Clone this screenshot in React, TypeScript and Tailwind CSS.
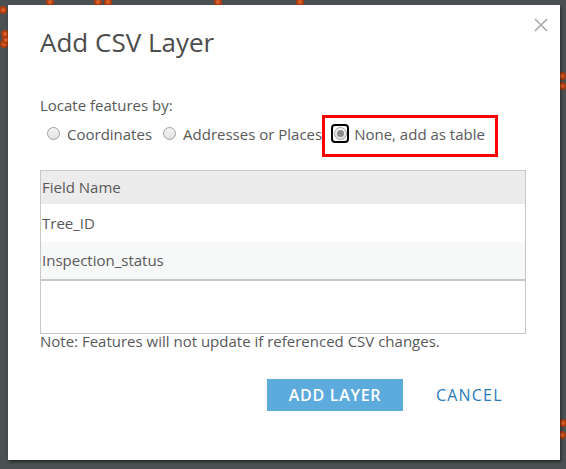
import React from "react";

const dots: [number, number][] = [
  [3, 10], [5, 34], [4, 44], [6, 40], [50, 2], [98, 2], [108, 2], [218, 2], [220, 8], [300, 2], [562, 76], [562, 86], [563, 423], [562, 435],
];

function Radio({ checked }: { checked?: boolean }) {
  return (
    <span className="inline-flex h-[13px] w-[13px] shrink-0 items-center justify-center rounded-full border border-[#a0a0a0] bg-gradient-to-b from-[#f4f4f4] to-[#e2e2e2]">
      {checked && <span className="h-[7px] w-[7px] rounded-full bg-[#8c8c8c]" />}
    </span>
  );
}

export default function App() {
  return (
    <div className="relative h-[469px] w-[566px] overflow-hidden bg-[#4b5052]" style={{ fontFamily: "'Open Sans', Lato, sans-serif" }}>
      {dots.map(([x, y], i) => (
        <span
          key={i}
          className="absolute h-[8px] w-[8px] rounded-full border-2 border-[#b03c10] bg-[#d9612b]"
          style={{ left: x - 4, top: y - 4 }}
        />
      ))}
      <div className="absolute left-[8px] top-[5px] flex h-[455px] w-[552px] flex-col bg-white pl-[32px] pr-[34px] shadow-[1px_2px_3px_rgba(0,0,0,0.5)]">
        <button className="absolute right-[11px] top-[12px] text-[#aaaaaa]">
          <svg width="16" height="16" viewBox="0 0 16 16" stroke="currentColor" strokeWidth="1.6" fill="none">
            <path d="M2 2 L14 14 M14 2 L2 14" />
          </svg>
        </button>
        <h1 className="mt-[20px] text-[26px] leading-[34px] text-[#4c4c4c]">Add CSV Layer</h1>
        <div className="mt-[37px] text-[15px] leading-[18px] text-[#595959]">Locate features by:</div>
        <div className="mt-[1px] flex items-center text-[15px] leading-[18px] text-[#595959]">
          <label className="mb-[5px] ml-[7px] flex items-center gap-[7px]">
            <Radio />
            <span>Coordinates</span>
          </label>
          <label className="mb-[5px] ml-[11px] flex items-center gap-[7px]">
            <Radio />
            <span>Addresses or Places</span>
          </label>
          <label className="flex h-[42px] items-center gap-[5px] border-[3px] border-[#ff0000] pb-[5px] pl-[6px] pr-[10px]">
            <span className="flex h-[19px] w-[18px] items-center justify-center rounded-[4px] border-2 border-black">
              <Radio checked />
            </span>
            <span>None, add as table</span>
          </label>
        </div>
        <div className="mt-[13px] flex h-[164px] flex-col border border-[#c8c8c8] text-[15px] text-[#595959]">
          <div className="flex h-[33px] shrink-0 items-center bg-[#ececec] pl-[1px]">Field Name</div>
          <div className="flex h-[38px] shrink-0 items-center bg-white pl-[1px]">Tree_ID</div>
          <div className="flex h-[39px] shrink-0 items-center border-b-2 border-[#c8c8c8] bg-[#f7f8f8] pl-[1px]">Inspection_status</div>
        </div>
        <div className="-mt-[1px] text-[15px] leading-[16px] text-[#595959]">Note: Features will not update if referenced CSV changes.</div>
        <div className="mt-[30px] flex items-center pl-[227px]">
          <button className="h-[32px] w-[136px] bg-[#5daadc] text-[16px] font-semibold tracking-[0.7px] text-white">ADD LAYER</button>
          <button className="ml-[33px] text-[16px] tracking-[1.2px] text-[#2a7ab8]">CANCEL</button>
        </div>
      </div>
    </div>
  );
}
